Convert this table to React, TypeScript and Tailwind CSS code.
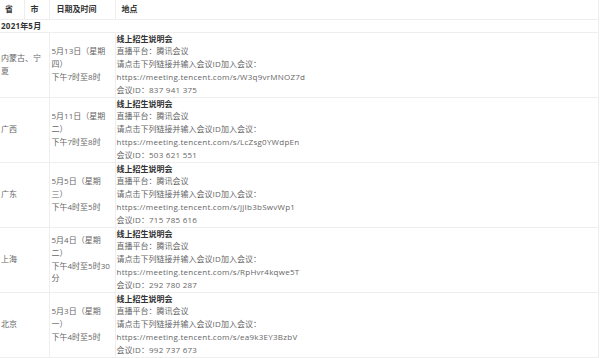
const rows = [
  {
    place: '内蒙古、宁夏',
    date: ['5月13日（星期四）', '下午7时至8时'],
    url: 'https://meeting.tencent.com/s/W3q9vrMNOZ7d',
    id: '837 941 375',
  },
  {
    place: '广西',
    date: ['5月11日（星期二）', '下午7时至8时'],
    url: 'https://meeting.tencent.com/s/LcZsg0YWdpEn',
    id: '503 621 551',
  },
  {
    place: '广东',
    date: ['5月5日（星期三）', '下午4时至5时'],
    url: 'https://meeting.tencent.com/s/jjIb3bSwvWp1',
    id: '715 785 616',
  },
  {
    place: '上海',
    date: ['5月4日（星期二）', '下午4时至5时30分'],
    url: 'https://meeting.tencent.com/s/RpHvr4kqwe5T',
    id: '292 780 287',
  },
  {
    place: '北京',
    date: ['5月3日（星期一）', '下午4时至5时'],
    url: 'https://meeting.tencent.com/s/ea9k3EY3BzbV',
    id: '992 737 673',
  },
];

// latin runs are a little wider than the CJK glyphs in the reference
function L({ children }: { children: React.ReactNode }) {
  return <span className="tracking-[0.25px]">{children}</span>;
}

export default function App() {
  return (
    <div
      className="w-[600px] h-[358px] overflow-hidden bg-white text-[8px] leading-[12.8px] text-[#666]"
      style={{ fontFamily: '"Open Sans", "Noto Sans CJK SC", sans-serif' }}
    >
      <table className="w-[599px] table-fixed border-collapse border-r border-[#eee]">
        <colgroup>
          <col className="w-[24px]" />
          <col className="w-[25px]" />
          <col className="w-[66px]" />
          <col />
        </colgroup>
        <thead>
          <tr className="h-[19px] border-b border-[#eee]">
            <th className="px-[5px] py-0 text-left font-semibold text-[#333] border-r border-[#eee]">省</th>
            <th className="px-[6px] py-0 text-left font-semibold text-[#333] border-r border-[#eee]">市</th>
            <th className="pl-[7px] py-0 text-left font-semibold text-[#333] border-r border-[#eee]">日期及时间</th>
            <th className="pl-[6px] py-0 text-left font-semibold text-[#333]">地点</th>
          </tr>
        </thead>
        <tbody>
          <tr className="border-b border-[#eee]">
            <td colSpan={4} className="px-[1px] py-0 leading-[12px] font-bold text-[#333]">
              <L>2021</L>年<L>5</L>月
            </td>
          </tr>
          {rows.map((r) => (
            <tr key={r.place} className="h-[65px] border-b border-[#eee]">
              <td colSpan={2} className="px-[1px] py-0 align-middle border-r border-[#eee]">{r.place}</td>
              <td className="px-[2px] py-0 align-middle border-r border-[#eee]">
                <div>{r.date[0]}</div>
                <div>{r.date[1]}</div>
              </td>
              <td className="px-[1px] py-0 align-middle">
                <div className="font-bold text-[#333]">线上招生说明会</div>
                <div>直播平台：腾讯会议</div>
                <div>
                  请点击下列链接并输入会议<L>ID</L>加入会议：
                </div>
                <div>
                  <L>{r.url}</L>
                </div>
                <div>
                  会议<L>ID</L>：<L>{r.id}</L>
                </div>
              </td>
            </tr>
          ))}
        </tbody>
      </table>
    </div>
  );
}
